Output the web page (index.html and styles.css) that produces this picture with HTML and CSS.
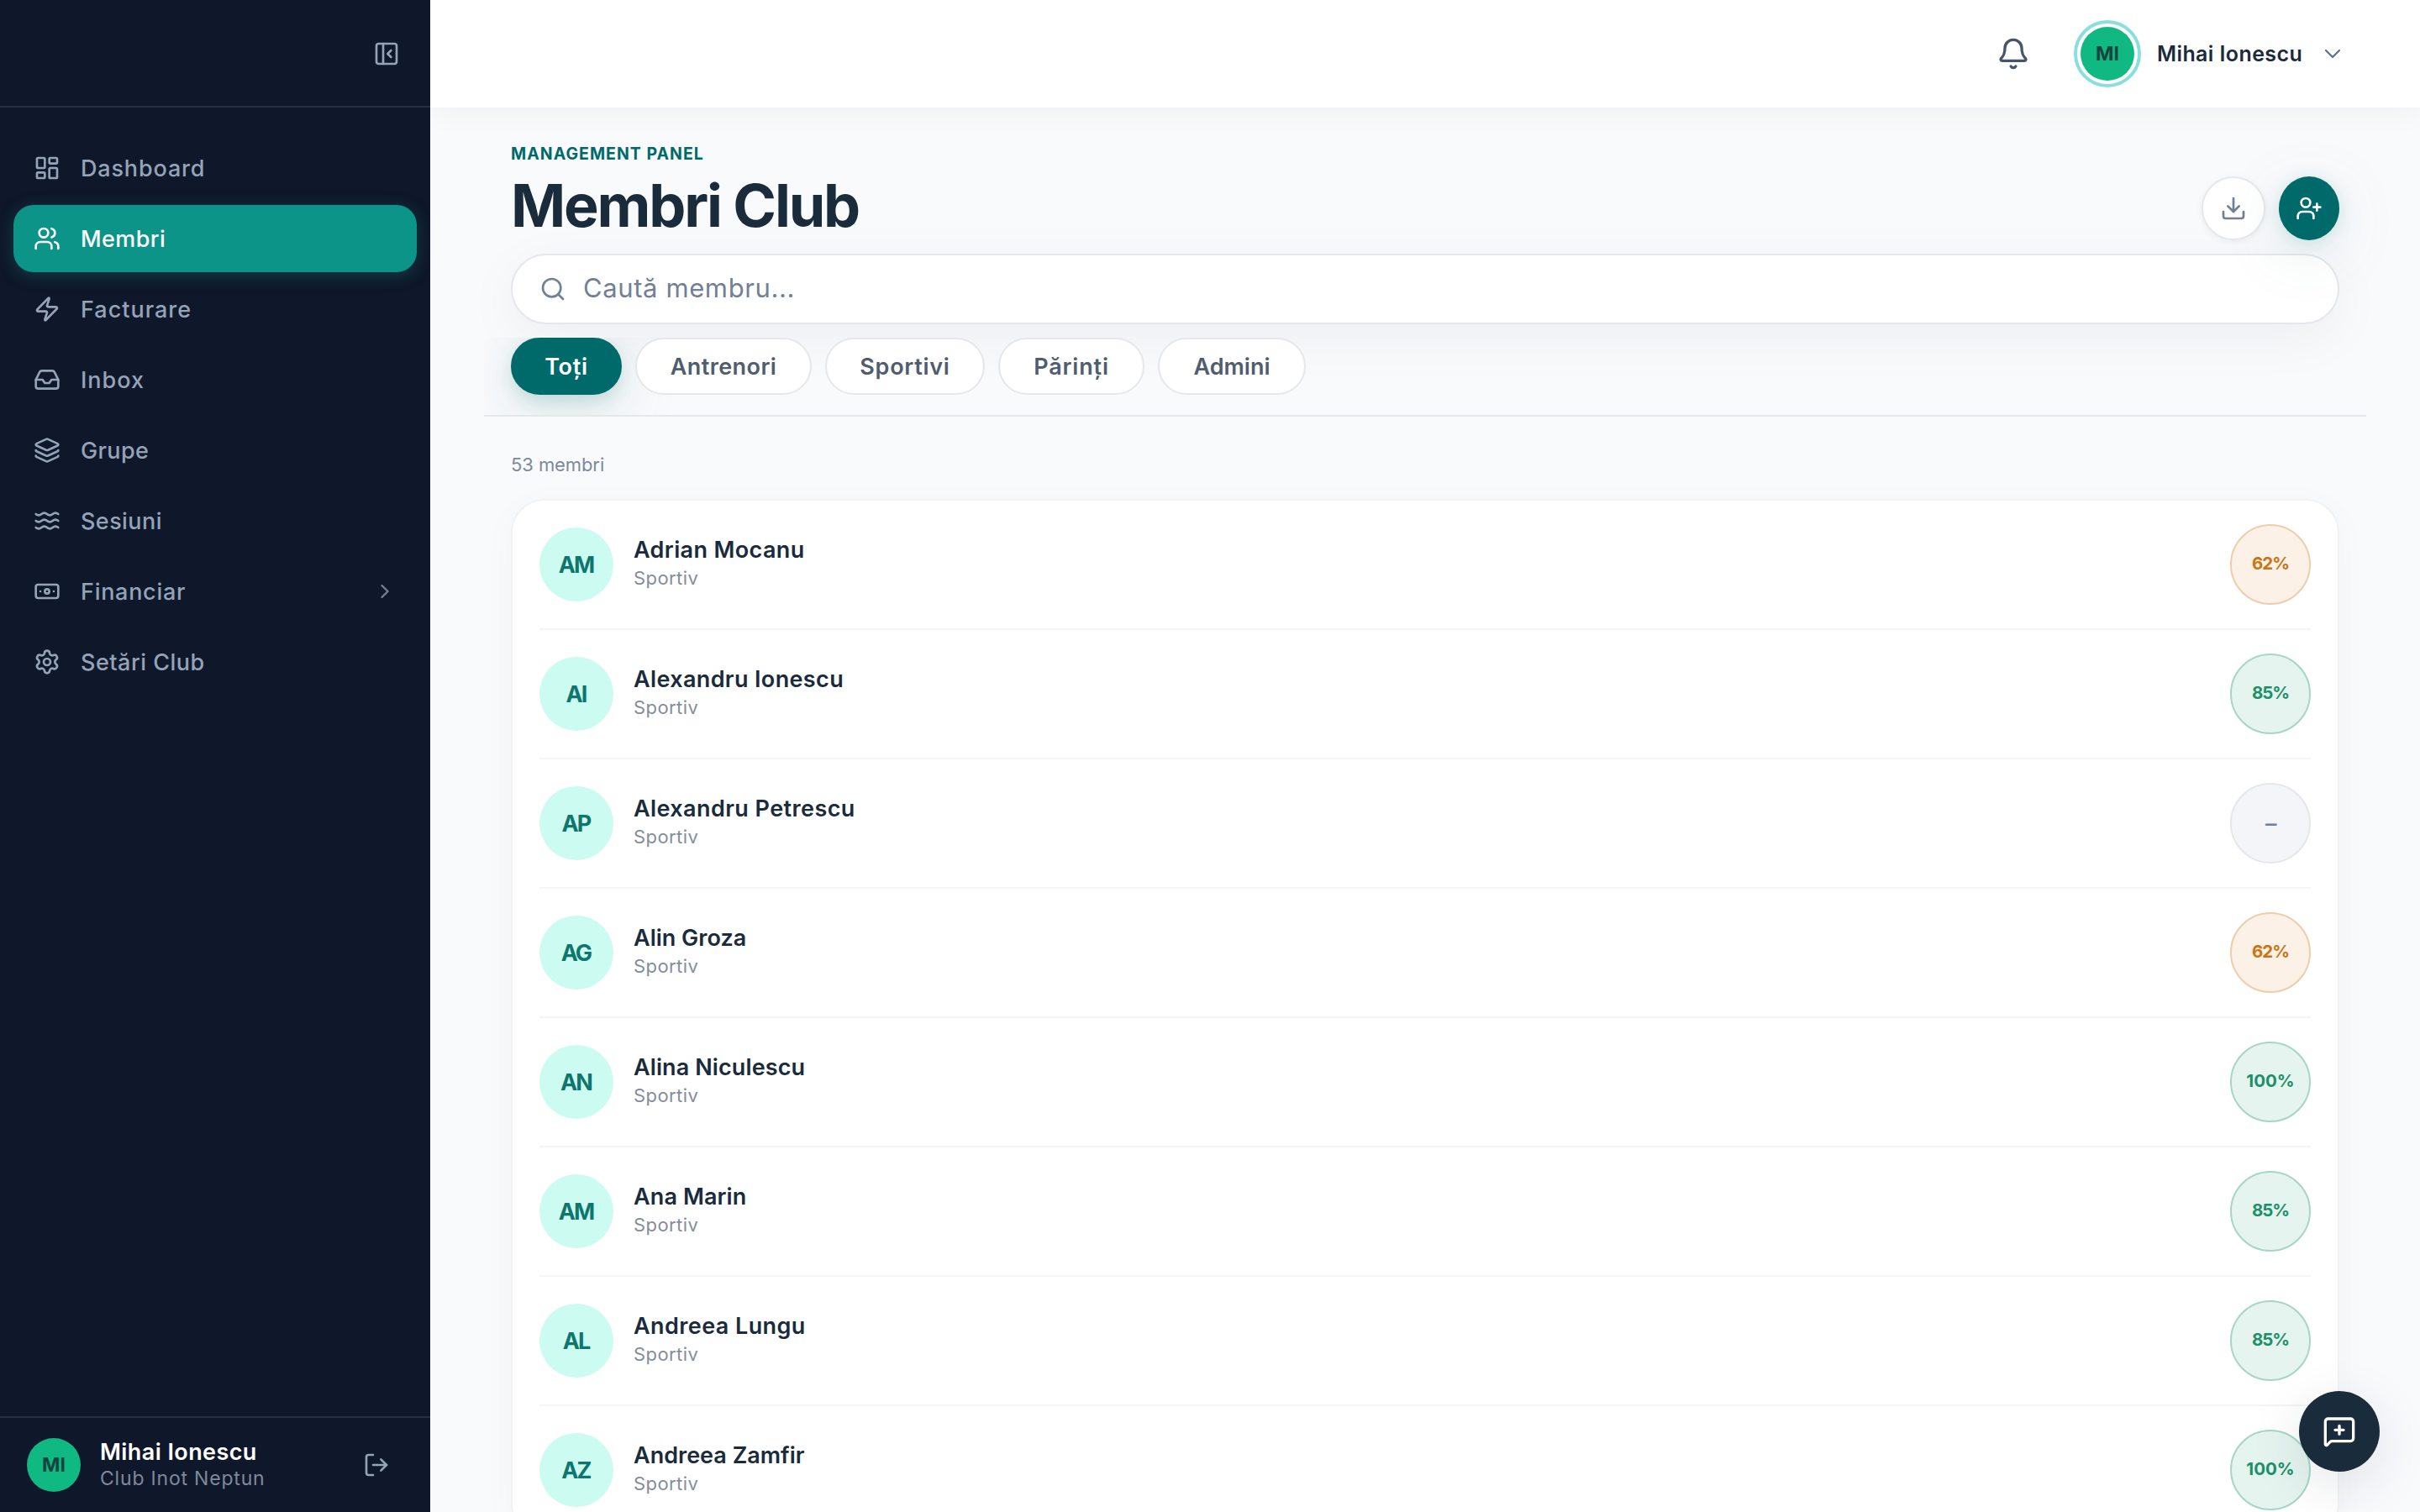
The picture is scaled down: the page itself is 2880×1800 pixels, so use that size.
FILE: index.html
```html
<!DOCTYPE html>
<html lang="ro">
<head>
<meta charset="utf-8">
<title>Membri Club</title>
<link rel="stylesheet" href="styles.css">
</head>
<body>
<div class="app">
  <aside class="sidebar">
    <div class="sidebar-top">
      <svg class="icon" viewBox="0 0 24 24"><rect x="3" y="3" width="18" height="18" rx="2"/><path d="M9 3v18"/><path d="m16 15-3-3 3-3"/></svg>
    </div>
    <nav class="nav">
      <a class="nav-item"><svg class="icon" viewBox="0 0 24 24"><rect x="3" y="3" width="7" height="9" rx="1"/><rect x="14" y="3" width="7" height="5" rx="1"/><rect x="14" y="12" width="7" height="9" rx="1"/><rect x="3" y="16" width="7" height="5" rx="1"/></svg><span class="t32">Dashboard</span></a>
      <a class="nav-item active"><svg class="icon" viewBox="0 0 24 24"><path d="M16 21v-2a4 4 0 0 0-4-4H6a4 4 0 0 0-4 4v2"/><circle cx="9" cy="7" r="4"/><path d="M16 3.128a4 4 0 0 1 0 7.744"/><path d="M22 21v-2a4 4 0 0 0-3-3.87"/></svg><span class="t16">Membri</span></a>
      <a class="nav-item"><svg class="icon" viewBox="0 0 24 24"><path d="M4 14a1 1 0 0 1-.78-1.63l9.9-10.2a.5.5 0 0 1 .86.46l-1.92 6.02A1 1 0 0 0 13 10h7a1 1 0 0 1 .78 1.63l-9.9 10.2a.5.5 0 0 1-.86-.46l1.92-6.02A1 1 0 0 0 11 14z"/></svg><span class="t38">Facturare</span></a>
      <a class="nav-item"><svg class="icon" viewBox="0 0 24 24"><path d="M22 12h-6l-2 3h-4l-2-3H2"/><path d="M5.45 5.11 2 12v6a2 2 0 0 0 2 2h16a2 2 0 0 0 2-2v-6l-3.45-6.89A2 2 0 0 0 16.76 4H7.24a2 2 0 0 0-1.79 1.11z"/></svg><span class="t38">Inbox</span></a>
      <a class="nav-item"><svg class="icon" viewBox="0 0 24 24"><path d="M12.83 2.18a2 2 0 0 0-1.66 0L2.6 6.08a1 1 0 0 0 0 1.83l8.58 3.91a2 2 0 0 0 1.66 0l8.58-3.9a1 1 0 0 0 0-1.83z"/><path d="M2 12a1 1 0 0 0 .58.91l8.6 3.91a2 2 0 0 0 1.65 0l8.58-3.9A1 1 0 0 0 22 12"/><path d="M2 17a1 1 0 0 0 .58.91l8.6 3.91a2 2 0 0 0 1.65 0l8.58-3.9A1 1 0 0 0 22 17"/></svg><span class="t13">Grupe</span></a>
      <a class="nav-item"><svg class="icon" viewBox="0 0 24 24"><path d="M2 6c.6.5 1.2 1 2.5 1C7 7 7 5 9.5 5c2.6 0 2.4 2 5 2 2.5 0 2.5-2 5-2 1.3 0 1.9.5 2.5 1"/><path d="M2 12c.6.5 1.2 1 2.5 1 2.5 0 2.5-2 5-2 2.6 0 2.4 2 5 2 2.5 0 2.5-2 5-2 1.3 0 1.9.5 2.5 1"/><path d="M2 18c.6.5 1.2 1 2.5 1 2.5 0 2.5-2 5-2 2.6 0 2.4 2 5 2 2.5 0 2.5-2 5-2 1.3 0 1.9.5 2.5 1"/></svg><span class="t16">Sesiuni</span></a>
      <a class="nav-item"><svg class="icon" viewBox="0 0 24 24"><rect x="2" y="6" width="20" height="12" rx="2"/><circle cx="12" cy="12" r="2"/><path d="M6 12h.01M18 12h.01"/></svg><span class="t27">Financiar</span><svg class="icon nav-chevron" viewBox="0 0 24 24"><path d="m9 18 6-6-6-6"/></svg></a>
      <a class="nav-item"><svg class="icon" viewBox="0 0 24 24"><path d="M9.671 4.136a2.34 2.34 0 0 1 4.659 0 2.34 2.34 0 0 0 3.319 1.915 2.34 2.34 0 0 1 2.33 4.033 2.34 2.34 0 0 0 0 3.831 2.34 2.34 0 0 1-2.33 4.033 2.34 2.34 0 0 0-3.319 1.915 2.34 2.34 0 0 1-4.659 0 2.34 2.34 0 0 0-3.32-1.915 2.34 2.34 0 0 1-2.33-4.033 2.34 2.34 0 0 0 0-3.831A2.34 2.34 0 0 1 6.35 6.051a2.34 2.34 0 0 0 3.319-1.915"/><circle cx="12" cy="12" r="3"/></svg><span class="t18">Setări Club</span></a>
    </nav>
    <div class="sidebar-user">
      <span class="user-avatar">MI</span>
      <div class="user-text"><div class="user-name t16">Mihai Ionescu</div><div class="user-club">Club Inot Neptun</div></div>
      <svg class="icon logout" viewBox="0 0 24 24"><path d="m16 17 5-5-5-5"/><path d="M21 12H9"/><path d="M9 21H5a2 2 0 0 1-2-2V5a2 2 0 0 1 2-2h4"/></svg>
    </div>
  </aside>

  <div class="content">
    <header class="topbar">
      <svg class="icon bell" viewBox="0 0 24 24"><path d="M10.268 21a2 2 0 0 0 3.464 0"/><path d="M3.262 15.326A1 1 0 0 0 4 17h16a1 1 0 0 0 .74-1.673C19.41 13.956 18 12.499 18 8A6 6 0 0 0 6 8c0 4.499-1.411 5.956-2.738 7.326"/></svg>
      <span class="ring"><span class="user-avatar">MI</span></span>
      <span class="topbar-name">Mihai Ionescu</span>
      <svg class="icon topbar-chevron" viewBox="0 0 24 24"><path d="m6 9 6 6 6-6"/></svg>
    </header>

    <main class="page">
      <div class="page-head">
        <div>
          <div class="eyebrow">MANAGEMENT PANEL</div>
          <h1 class="title">Membri Club</h1>
        </div>
        <div class="actions">
          <button class="btn-export"><svg class="icon" viewBox="0 0 24 24"><path d="M12 15V3"/><path d="M21 15v4a2 2 0 0 1-2 2H5a2 2 0 0 1-2-2v-4"/><path d="m7 10 5 5 5-5"/></svg></button>
          <button class="btn-add"><svg class="icon" viewBox="0 0 24 24"><path d="M16 21v-2a4 4 0 0 0-4-4H6a4 4 0 0 0-4 4v2"/><circle cx="9" cy="7" r="4"/><path d="M19 8v6M22 11h-6"/></svg></button>
        </div>
      </div>

      <div class="search">
        <svg class="icon" viewBox="0 0 24 24"><circle cx="11" cy="11" r="8"/><path d="m21 21-4.34-4.34"/></svg>
        <span class="search-text">Caută membru...</span>
      </div>

      <div class="tabs">
        <button class="tab selected w-132 t27">Toți</button>
        <button class="tab w-210 t16">Antrenori</button>
        <button class="tab w-190 t27">Sportivi</button>
        <button class="tab w-174 t32">Părinți</button>
        <button class="tab w-176">Admini</button>
      </div>

      <div class="count">53 membri</div>

      <div class="list">
        <div class="row"><span class="avatar">AM</span><div class="who"><div class="name t13">Adrian Mocanu</div><div class="role">Sportiv</div></div><span class="score warn">62%</span></div>
        <div class="row"><span class="avatar">AI</span><div class="who"><div class="name t13">Alexandru Ionescu</div><div class="role">Sportiv</div></div><span class="score good">85%</span></div>
        <div class="row"><span class="avatar">AP</span><div class="who"><div class="name t16">Alexandru Petrescu</div><div class="role">Sportiv</div></div><span class="score none">–</span></div>
        <div class="row"><span class="avatar">AG</span><div class="who"><div class="name">Alin Groza</div><div class="role">Sportiv</div></div><span class="score warn">62%</span></div>
        <div class="row"><span class="avatar">AN</span><div class="who"><div class="name t5">Alina Niculescu</div><div class="role">Sportiv</div></div><span class="score good wide">100%</span></div>
        <div class="row"><span class="avatar">AM</span><div class="who"><div class="name t5">Ana Marin</div><div class="role">Sportiv</div></div><span class="score good">85%</span></div>
        <div class="row"><span class="avatar">AL</span><div class="who"><div class="name t16">Andreea Lungu</div><div class="role">Sportiv</div></div><span class="score good">85%</span></div>
        <div class="row"><span class="avatar">AZ</span><div class="who"><div class="name">Andreea Zamfir</div><div class="role">Sportiv</div></div><span class="score good wide">100%</span></div>
      </div>
    </main>
  </div>

  <button class="fab"><svg class="icon" viewBox="0 0 24 24"><path d="M22 17a2 2 0 0 1-2 2H6.828a2 2 0 0 0-1.414.586l-2.202 2.202A.71.71 0 0 1 2 21.286V5a2 2 0 0 1 2-2h16a2 2 0 0 1 2 2z"/><path d="M12 8v6M9 11h6"/></svg></button>
</div>
</body>
</html>
```
FILE: styles.css
```css
* { box-sizing: border-box; }

body {
  margin: 0;
  font-family: Inter, "Liberation Sans", sans-serif;
  color: #1a2b3c;
  background: #f9fafc;
}

button { font: inherit; padding: 0; border: 0; }

.app { display: flex; height: 1800px; overflow: hidden; }

.icon {
  width: 32px;
  height: 32px;
  flex: none;
  display: block;
  fill: none;
  stroke: currentColor;
  stroke-width: 2;
  stroke-linecap: round;
  stroke-linejoin: round;
}

/* Tracking steps, in thousandths of an em */
.t5 { letter-spacing: .004em; }
.t13 { letter-spacing: .0135em; }
.t16 { letter-spacing: .0155em; }
.t18 { letter-spacing: .018em; }
.t27 { letter-spacing: .0265em; }
.t32 { letter-spacing: .031em; }
.t38 { letter-spacing: .037em; }

/* Sidebar */
.sidebar {
  position: relative;
  z-index: 2;
  width: 512px;
  flex: none;
  display: flex;
  flex-direction: column;
  background: #0f172a;
  color: #94a3b8;
}
.sidebar-top {
  height: 128px;
  flex: none;
  display: flex;
  align-items: center;
  justify-content: flex-end;
  padding: 2px 36px 0 0;
  border-bottom: 2px solid #272e3f;
}
.nav {
  flex: 1;
  display: flex;
  flex-direction: column;
  gap: 4px;
  padding: 32px 16px;
}
.nav-item {
  height: 80px;
  display: flex;
  align-items: center;
  gap: 23px;
  padding: 0 24px;
  border-radius: 24px;
  font-size: 27px;
  font-weight: 500;
  line-height: 40px;
}
.nav-item span { padding: 2px 0 0 1px; }
.nav-item .icon { stroke-width: 2; }
.nav-item.active {
  background: #0d9488;
  color: #fff;
  box-shadow: 0 4px 20px rgba(13, 148, 136, .3);
}
.nav-item .nav-chevron {
  width: 28px;
  height: 28px;
  margin-left: auto;
  opacity: .75;
}
.sidebar-user {
  height: 114px;
  flex: none;
  display: flex;
  align-items: center;
  padding: 0 48px 0 32px;
  border-top: 2px solid #272e3f;
}
.user-avatar {
  width: 64px;
  height: 64px;
  flex: none;
  display: flex;
  align-items: center;
  justify-content: center;
  border-radius: 50%;
  background: #10b981;
  color: #134440;
  font-size: 23px;
  font-weight: 700;
}
.user-text { flex: 1; padding: 0 0 1px 23px; }
.user-name {
  font-size: 27px;
  font-weight: 600;
  line-height: 32px;
  color: #fff;
}
.user-club {
  font-size: 23px;
  line-height: 30px;
  letter-spacing: .035em;
  color: #7e899c;
}
.logout { color: #94a3b8; }

/* Top bar */
.content { flex: 1; min-width: 0; }
.topbar {
  position: relative;
  z-index: 1;
  height: 128px;
  display: flex;
  align-items: center;
  justify-content: flex-end;
  padding-right: 88px;
  background: #fff;
  box-shadow: 0 8px 32px rgba(15, 23, 42, .04);
}
.bell {
  width: 40px;
  height: 40px;
  margin-right: 52px;
  color: #475569;
}
.ring {
  padding: 4px;
  margin-right: 19px;
  border: 4px solid #8adfdd;
  border-radius: 50%;
}
.topbar-name {
  width: 173px;
  margin-right: 20px;
  padding-bottom: 1px;
  font-size: 25px;
  font-weight: 600;
  line-height: 36px;
  letter-spacing: .016em;
  white-space: nowrap;
}
.topbar-chevron { color: #64748b; stroke-width: 1.8; }

/* Page header */
.page { padding: 44px 96px 0; }
.page-head { display: flex; justify-content: space-between; align-items: flex-end; }
.eyebrow {
  font-size: 19.5px;
  font-weight: 700;
  line-height: 22px;
  letter-spacing: .052em;
  color: #006a6a;
}
.title {
  margin: 11px 0 1px;
  font-size: 70px;
  font-weight: 700;
  line-height: 80px;
  letter-spacing: -.031em;
}
.actions { display: flex; gap: 16px; }
.btn-export, .btn-add {
  height: 76px;
  display: flex;
  align-items: center;
  justify-content: center;
  border-radius: 50%;
}
.btn-export {
  width: 76px;
  background: #fff;
  border: 2px solid #e6e8eb;
  color: #718096;
  box-shadow: 0 2px 8px rgba(15, 23, 42, .06);
}
.btn-add {
  width: 72px;
  background: #006a6a;
  color: #fff;
  box-shadow: 0 16px 80px rgba(0, 106, 106, .12), 0 4px 20px rgba(0, 106, 106, .14);
}
.search {
  height: 84px;
  margin-top: 16px;
  display: flex;
  align-items: center;
  gap: 20px;
  padding: 0 32px;
  background: #fff;
  border: 2px solid #e5e7ea;
  border-radius: 42px;
  color: #718096;
  box-shadow: 0 16px 64px rgba(15, 23, 42, .05);
}
.search-text {
  padding-bottom: 2px;
  font-size: 31px;
  line-height: 40px;
  letter-spacing: .0195em;
}

/* Filter tabs; the strip bleeds past the page gutter and clips its shadows */
.tabs {
  position: relative;
  display: flex;
  gap: 16px;
  height: 94px;
  margin: 16px -32px 0;
  padding: 0 32px 24px;
  border-bottom: 2px solid #e5e8eb;
  overflow: hidden;
}
.tab {
  height: 68px;
  flex: none;
  border: 2px solid #e5e7ea;
  border-radius: 34px;
  background: #fff;
  color: #4f5d6f;
  font-size: 27px;
  font-weight: 600;
}
.tab.selected {
  border-color: #006a6a;
  background: #006a6a;
  color: #fff;
  box-shadow: 0 16px 80px rgba(0, 106, 106, .16), 0 8px 20px rgba(0, 106, 106, .15);
}
.w-132 { width: 132px; }
.w-210 { width: 210px; }
.w-190 { width: 190px; }
.w-174 { width: 174px; }
.w-176 { width: 176px; }

.count {
  margin: 42px 0 26px;
  font-size: 22px;
  line-height: 30px;
  letter-spacing: -.004em;
  color: #7d899b;
}

/* Member list */
.list {
  padding: 0 32px;
  border: 2px solid #f1f2f4;
  border-radius: 40px;
  background: #fff;
  box-shadow: 0 8px 40px rgba(15, 23, 42, .03);
}
.row {
  height: 154px;
  display: flex;
  align-items: center;
  border-bottom: 2px solid #f3f4f6;
}
.avatar {
  width: 88px;
  height: 88px;
  flex: none;
  display: flex;
  align-items: center;
  justify-content: center;
  padding-right: 1px;
  border-radius: 50%;
  background: #ccfbf1;
  color: #0f766e;
  font-size: 27px;
  font-weight: 700;
  letter-spacing: -.07em;
}
.who { flex: 1; padding: 0 0 3px 24px; }
.name { font-size: 27px; font-weight: 600; line-height: 36px; }
.role {
  font-size: 22px;
  line-height: 31px;
  letter-spacing: .0195em;
  color: #858d9b;
}
.score {
  width: 96px;
  height: 96px;
  flex: none;
  display: flex;
  align-items: center;
  justify-content: center;
  padding-bottom: 3px;
  border: 2px solid;
  border-radius: 50%;
  font-size: 20.5px;
  font-weight: 700;
  letter-spacing: -.05em;
}
.score.wide { letter-spacing: 0; }
.score.warn { background: #fcf1e7; border-color: #eeceaa; color: #ca7412; }
.score.good { background: #e5f4ef; border-color: #a6d6c5; color: #1c9068; }
.score.none {
  background: #f4f5f8;
  border-color: #e5e7eb;
  color: #718096;
  padding-bottom: 0;
  font-size: 27px;
  font-weight: 500;
}

/* Feedback button floating over the page */
.fab {
  position: absolute;
  z-index: 3;
  left: 2736px;
  top: 1656px;
  width: 96px;
  height: 96px;
  display: flex;
  align-items: center;
  justify-content: center;
  border-radius: 50%;
  background: #1a2b3c;
  color: #fff;
  box-shadow: 0 16px 64px rgba(26, 43, 60, .12);
}
.fab .icon { width: 40px; height: 40px; }
```
